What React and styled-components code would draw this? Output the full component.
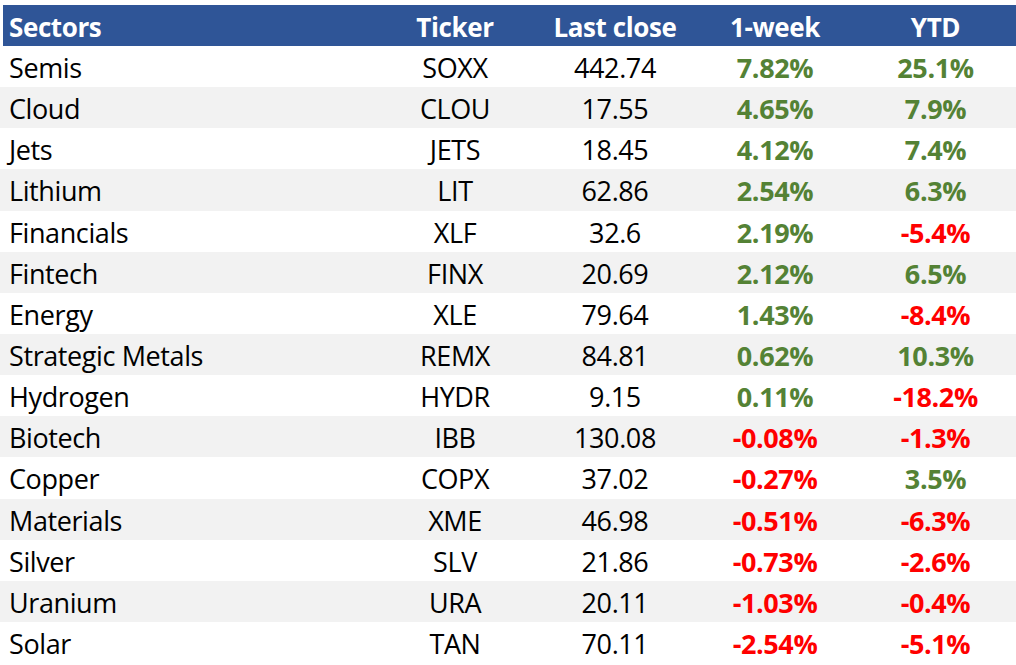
import React from "react";
import styled, { createGlobalStyle } from "styled-components";

const Global = createGlobalStyle`
  html, body { margin: 0; padding: 0; background: #ffffff; }
  body { font-family: "Open Sans", Lato, sans-serif; }
`;

const Table = styled.div`
  width: 1016px;
  padding-top: 5px;
  display: flex;
  flex-direction: column;
`;

const HeaderRow = styled.div`
  display: grid;
  grid-template-columns: 372px 160px 160px 160px 161px;
  height: 41px;
  margin-left: 3px;
  background: #2f5597;
  color: #ffffff;
  font-size: 26px;
  align-items: center;
`;

const Row = styled.div`
  display: grid;
  grid-template-columns: 375px 160px 160px 160px 161px;
  height: 41.15px;
  background: ${(p) => (p.$shade ? "#f2f2f2" : "#ffffff")};
  font-size: 27px;
  align-items: center;
  color: #000000;
`;

const Cell = styled.div`
  text-align: ${(p) => (p.$left ? "left" : "center")};
  padding-left: ${(p) => (p.$left ? p.$pad : "0px")};
  padding-top: 2px;
  font-weight: ${(p) => (p.$bold ? 700 : 400)};
  color: ${(p) => p.$color || "inherit"};
  white-space: nowrap;
  line-height: 39px;
  letter-spacing: -0.4px;
`;

const HeadCell = styled(Cell)`
  padding-top: 4px;
  line-height: 37px;
  font-weight: 700;
`;

const data = [
  ["Semis", "SOXX", "442.74", "7.82%", "25.1%"],
  ["Cloud", "CLOU", "17.55", "4.65%", "7.9%"],
  ["Jets", "JETS", "18.45", "4.12%", "7.4%"],
  ["Lithium", "LIT", "62.86", "2.54%", "6.3%"],
  ["Financials", "XLF", "32.6", "2.19%", "-5.4%"],
  ["Fintech", "FINX", "20.69", "2.12%", "6.5%"],
  ["Energy", "XLE", "79.64", "1.43%", "-8.4%"],
  ["Strategic Metals", "REMX", "84.81", "0.62%", "10.3%"],
  ["Hydrogen", "HYDR", "9.15", "0.11%", "-18.2%"],
  ["Biotech", "IBB", "130.08", "-0.08%", "-1.3%"],
  ["Copper", "COPX", "37.02", "-0.27%", "3.5%"],
  ["Materials", "XME", "46.98", "-0.51%", "-6.3%"],
  ["Silver", "SLV", "21.86", "-0.73%", "-2.6%"],
  ["Uranium", "URA", "20.11", "-1.03%", "-0.4%"],
  ["Solar", "TAN", "70.11", "-2.54%", "-5.1%"],
];

const tone = (v) => (v.startsWith("-") ? "#ff0000" : "#548235");

export default function App() {
  return (
    <>
      <Global />
      <Table>
        <HeaderRow>
          <HeadCell $left $pad="6px">Sectors</HeadCell>
          <HeadCell>Ticker</HeadCell>
          <HeadCell>Last close</HeadCell>
          <HeadCell>1-week</HeadCell>
          <HeadCell>YTD</HeadCell>
        </HeaderRow>
        {data.map((r, i) => (
          <Row key={r[0]} $shade={i % 2 === 1}>
            <Cell $left $pad="9px">{r[0]}</Cell>
            <Cell>{r[1]}</Cell>
            <Cell>{r[2]}</Cell>
            <Cell $bold $color={tone(r[3])}>{r[3]}</Cell>
            <Cell $bold $color={tone(r[4])}>{r[4]}</Cell>
          </Row>
        ))}
      </Table>
    </>
  );
}
